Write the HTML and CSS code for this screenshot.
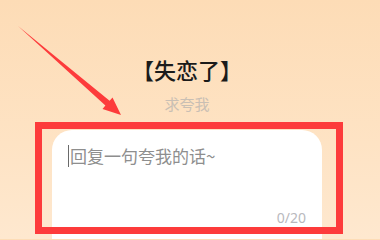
FILE: index.html
```html
<!DOCTYPE html>
<html lang="zh">
<head>
<meta charset="utf-8">
<link rel="stylesheet" href="styles.css">
</head>
<body>
<div class="page">
  <div class="column">
    <div class="title">【失恋了】</div>
    <div class="subtitle">求夸我</div>
    <div class="card">
      <div class="input"><span class="caret"></span><span class="placeholder">回复一句夸我的话~</span></div>
      <div class="counter">0/20</div>
    </div>
  </div>
  <div class="highlight"></div>
  <svg class="arrow" width="380" height="239" viewBox="0 0 380 239">
    <polygon points="18,26 109.6,100.8 112.5,97.6 121,115 102.5,109 105.4,105.6" fill="#fd3b3b"/>
  </svg>
</div>
</body>
</html>
```

FILE: styles.css
```css
html, body {
  margin: 0;
  padding: 0;
}
body {
  width: 380px;
  height: 239px;
  overflow: hidden;
  background: linear-gradient(180deg, #fddcb6 0%, #fee3c4 60%, #fee8cf 100%);
  font-family: "Noto Sans CJK SC", "Noto Sans", sans-serif;
}
.page {
  position: relative;
  width: 380px;
  height: 239px;
  overflow: hidden;
}
.column {
  margin-left: 52px;
  width: 270px;
  padding-top: 54px;
  display: flex;
  flex-direction: column;
  align-items: center;
}
.title {
  font-size: 22px;
  line-height: 30px;
  font-weight: 500;
  color: #1b1b1b;
}
.subtitle {
  margin-top: 10px;
  font-size: 15px;
  line-height: 20px;
  color: #c9bfb4;
}
.card {
  margin-top: 16px;
  align-self: stretch;
  height: 109px;
  background: #ffffff;
  border-radius: 20px 20px 0 0;
  padding: 15px 16px 0 16px;
  box-sizing: border-box;
  display: flex;
  flex-direction: column;
}
.input {
  display: flex;
  align-items: center;
  height: 22px;
}
.caret {
  width: 1px;
  height: 22px;
  background: #6a6a6a;
  margin-right: 1px;
}
.placeholder {
  font-size: 17px;
  line-height: 22px;
  color: #8e8e8e;
}
.counter {
  margin-top: 41px;
  align-self: flex-end;
  font-size: 14px;
  line-height: 20px;
  color: #b9b9bd;
  font-family: "Noto Sans", sans-serif;
}
.highlight {
  position: absolute;
  left: 35px;
  top: 122px;
  width: 308px;
  height: 112px;
  box-sizing: border-box;
  border: 7px solid #fd3b3b;
}
.arrow {
  position: absolute;
  left: 0;
  top: 0;
}
```
